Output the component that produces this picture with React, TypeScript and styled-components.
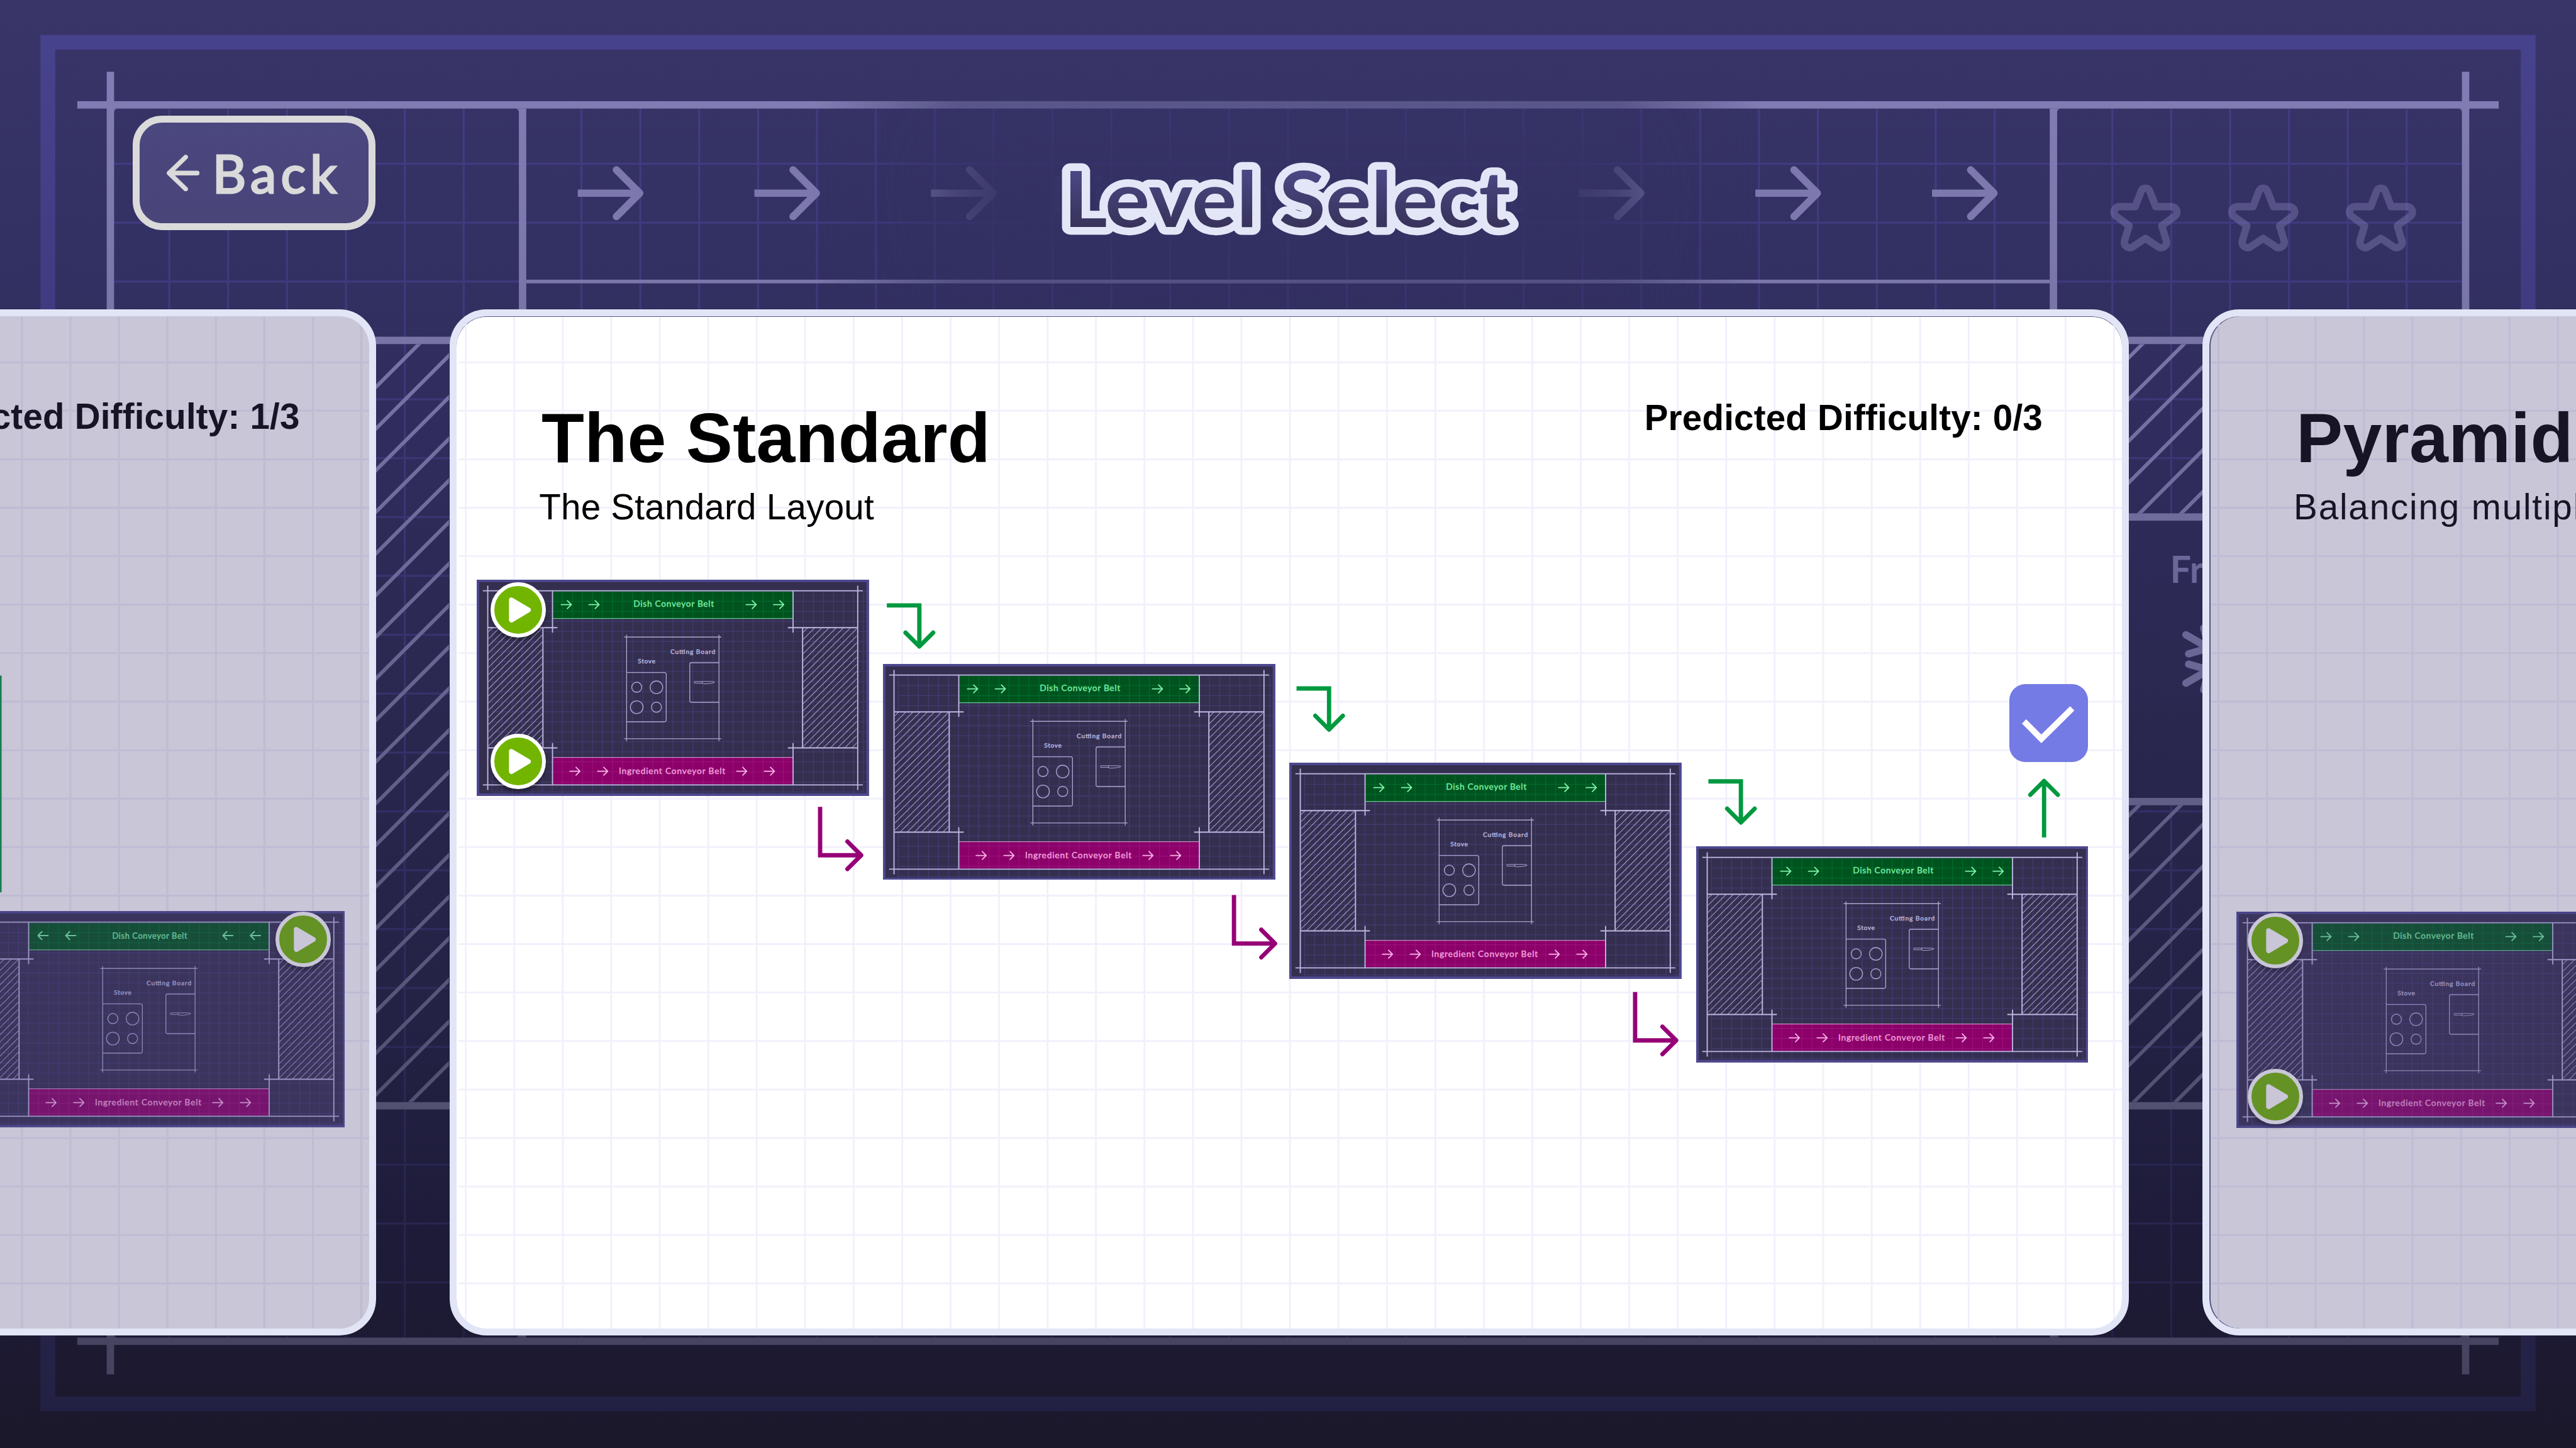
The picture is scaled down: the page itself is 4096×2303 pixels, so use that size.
import React from "react";
import styled, { createGlobalStyle, css } from "styled-components";

const S = 0.97524;
const u = (n: number) => `${(n * S).toFixed(3)}px`;

const hand = `Lato, "Noto Sans", sans-serif`;
const body = `"Liberation Sans", Arial, sans-serif`;

const GREEN = "#00993f";
const PINK = "#960077";

const GlobalStyle = createGlobalStyle`
  html, body { margin: 0; padding: 0; background: #1b182c; }
  *, *::before, *::after { box-sizing: border-box; }
`;

const Stage = styled.main`
  display: grid;
  grid-template: 100% / 100%;
  width: 4096px;
  height: 2303px;
  overflow: hidden;
  background: #2a274f;
`;

const Backdrop = styled.svg`
  grid-area: 1 / 1;
  display: block;
  width: ${u(4200)};
  height: 2303px;
`;

const Screen = styled.div`
  grid-area: 1 / 1;
  display: flex;
  flex-direction: column;
  min-width: 0;
  z-index: 1;
`;

const TopBar = styled.header`
  display: grid;
  grid-template-columns: 1fr auto 1fr;
  align-items: start;
  height: ${u(504)};
  padding: ${u(189)} ${u(216)} 0;
  flex: none;
`;

const BackButton = styled.button`
  display: flex;
  align-items: center;
  width: ${u(396)};
  height: ${u(186)};
  padding: 0 0 0 ${u(44)};
  border: ${u(12)} solid #dadada;
  border-radius: ${u(48)};
  background: linear-gradient(#4b477f, #494579);
  color: #dadada;
  font: 400 ${u(85)} / 1 ${hand};
  letter-spacing: ${u(7.5)};
`;

const BackArrow = styled.svg`
  width: ${u(54)};
  height: ${u(60)};
  margin-right: ${u(21)};
  flex: none;
`;

const BackLabel = styled.span`
  -webkit-text-stroke: ${u(3)} #dadada;
`;

const Title = styled.h1`
  margin: ${u(46)} 0 0;
  font-size: inherit;
  line-height: 0;
`;

const TitleArt = styled.svg`
  display: block;
  width: ${u(800)};
  height: ${u(170)};
`;

const Carousel = styled.section`
  display: flex;
  gap: ${u(119.7)};
  margin-left: ${u(-2125)};
  height: ${u(1674)};
`;

const CardFrame = styled.article<{ $dim?: boolean; $seam?: string }>`
  position: relative;
  flex: none;
  display: flex;
  flex-direction: column;
  width: ${u(2738)};
  height: 100%;
  border: ${u(12)} solid #e2e5f6;
  border-radius: ${u(60)};
  background: #fff;
  overflow: hidden;
  box-shadow: ${(p) => (p.$seam ? `inset ${p.$seam} 0 #5d5890` : "none")};
  ${(p) =>
    p.$dim &&
    css`
      &::after {
        content: "";
        position: absolute;
        inset: 0;
        background: rgba(73, 66, 121, 0.3);
      }
    `}
`;

const Paper = styled.svg`
  position: absolute;
  inset: 0;
  width: 100%;
  height: 100%;
`;

const CardHead = styled.div<{ $start?: number; $end: number; $top: number }>`
  position: relative;
  display: flex;
  justify-content: space-between;
  align-items: flex-start;
  padding: ${(p) => `${u(p.$top)} ${u(p.$end)} 0 ${u(p.$start ?? 135)}`};
`;

const Names = styled.div`
  display: flex;
  flex-direction: column;
  gap: ${u(28)};
  padding-top: ${u(3.5)};
`;

const CardTitle = styled.h2`
  margin: 0 0 0 ${u(4)};
  font: 700 ${u(114)} / 1 ${body};
  letter-spacing: ${u(0.3)};
  color: #000;
  white-space: nowrap;
`;

const Subtitle = styled.p<{ $track?: number }>`
  margin: 0;
  font: 400 ${u(58)} / 1 ${body};
  letter-spacing: ${(p) => u(p.$track ?? 0.25)};
  color: #000;
  white-space: nowrap;
`;

const Difficulty = styled.div`
  font: 700 ${u(58)} / 1 ${body};
  letter-spacing: ${u(0.2)};
  color: #000;
  white-space: nowrap;
`;

const Canvas = styled.svg`
  position: absolute;
  left: 0;
  top: 0;
  width: ${u(2714)};
  height: ${u(1650)};
`;

const Node = styled.div<{ $x: number; $y: number }>`
  position: absolute;
  left: ${(p) => u(p.$x)};
  top: ${(p) => u(p.$y)};
  width: ${u(639.5)};
  height: ${u(352.5)};
`;

const Plan = styled.svg`
  display: block;
  width: 100%;
  height: 100%;
`;

const Badge = styled.div<{ $x: number; $y: number }>`
  position: absolute;
  left: ${(p) => u(p.$x - 45.3)};
  top: ${(p) => u(p.$y - 45.3)};
  width: ${u(90.6)};
  height: ${u(90.6)};
  border: ${u(6.8)} solid #fff;
  border-radius: 50%;
  background: #72b500;
  box-shadow: 0 ${u(6)} ${u(5)} rgba(0, 0, 0, 0.28);
`;

const BadgeIcon = styled.svg`
  display: block;
  width: 100%;
  height: 100%;
`;

const Check = styled.div`
  position: absolute;
  left: ${u(2532)};
  top: ${u(600)};
  width: ${u(128)};
  height: ${u(128)};
  border-radius: ${u(26)};
  background: #747be4;
`;

const range = (n: number) => Array.from({ length: n }, (_, i) => i);

const arrowPath = (x: number, y: number) =>
  `M${x} ${y}h102M${x + 63} ${y - 38}l38 38l-38 38`;

const hatchPath = (sum0: number, step: number, count: number, x0: number, x1: number) =>
  range(count)
    .map((i) => sum0 + i * step)
    .map((s) => `M${x0} ${s - x0}L${x1} ${s - x1}`)
    .join("");

const STAR =
  "M-16.7 57L-6.9 31.5A7.4 7.4 0 0 1 6.9 31.5L16.7 57H42.5A8.7 8.7 0 0 1 47.6 72.8L26.7 88L34.2 113A9 9 0 0 1 20.8 122.6L0 108.7L-20.8 122.6A9 9 0 0 1 -34.2 113L-26.7 88L-47.6 72.8A8.7 8.7 0 0 1 -42.5 57Z";

const BELT_ARROWS = [942, 1230, 1518, 2574, 2862, 3150];

function Blueprint() {
  const xs = range(40).map((i) => 180 + i * 96);
  const ys = range(21).map((i) => 267 + i * 96);
  const grid =
    xs.map((x) => `M${x} 177V2181`).join("") + ys.map((y) => `M180 ${y}H4020`).join("");
  return (
    <Backdrop viewBox="0 0 4200 2361" preserveAspectRatio="none" aria-hidden>
      <defs>
        <linearGradient id="bg" gradientUnits="userSpaceOnUse" x1="0" y1="0" x2="0" y2="2361">
          <stop offset="0" stopColor="#393569" />
          <stop offset=".17" stopColor="#333063" />
          <stop offset=".3" stopColor="#302c5d" />
          <stop offset=".5" stopColor="#2a274f" />
          <stop offset=".72" stopColor="#232143" />
          <stop offset=".86" stopColor="#1e1b39" />
          <stop offset="1" stopColor="#1b182b" />
        </linearGradient>
        <linearGradient id="line" gradientUnits="userSpaceOnUse" x1="0" y1="0" x2="0" y2="2361">
          <stop offset="0" stopColor="#8480b8" />
          <stop offset=".15" stopColor="#7d79ae" />
          <stop offset=".235" stopColor="#7874a6" />
          <stop offset=".36" stopColor="#6f6b9b" />
          <stop offset=".555" stopColor="#615e87" />
          <stop offset=".765" stopColor="#525070" />
          <stop offset=".93" stopColor="#464460" />
          <stop offset="1" stopColor="#424059" />
        </linearGradient>
        <linearGradient id="grid" gradientUnits="userSpaceOnUse" x1="0" y1="0" x2="0" y2="2361">
          <stop offset="0" stopColor="#443d86" />
          <stop offset=".2" stopColor="#3f397c" />
          <stop offset=".5" stopColor="#36316a" />
          <stop offset=".8" stopColor="#292652" />
          <stop offset="1" stopColor="#221f43" />
        </linearGradient>
        <linearGradient id="frame" gradientUnits="userSpaceOnUse" x1="0" y1="0" x2="0" y2="2361">
          <stop offset="0" stopColor="#48438e" />
          <stop offset=".2" stopColor="#413c81" />
          <stop offset=".9" stopColor="#252348" />
          <stop offset="1" stopColor="#222041" />
        </linearGradient>
        <linearGradient id="fade" x1="1330" x2="2870" y1="0" y2="0" gradientUnits="userSpaceOnUse">
          <stop offset="0" stopColor="#fff" stopOpacity="0" />
          <stop offset=".15" stopColor="#fff" stopOpacity=".52" />
          <stop offset=".85" stopColor="#fff" stopOpacity=".52" />
          <stop offset="1" stopColor="#fff" stopOpacity="0" />
        </linearGradient>
        <filter
          id="soft"
          filterUnits="userSpaceOnUse"
          x="1300"
          y="40"
          width="1600"
          height="580"
          colorInterpolationFilters="sRGB"
        >
          <feGaussianBlur stdDeviation="52" />
        </filter>
        <mask id="bandMask" maskUnits="userSpaceOnUse" x="1330" y="165" width="1540" height="340">
          <rect x="1330" y="165" width="1540" height="340" fill="url(#fade)" />
        </mask>
        <mask id="glowMask" maskUnits="userSpaceOnUse" x="1300" y="177" width="1600" height="279">
          <rect x="1550" y="240" width="1100" height="165" fill="#fff" fillOpacity=".88" filter="url(#soft)" />
        </mask>
        <clipPath id="hatchClip">
          <path d="M613 561H732V1797H613ZM3470 561H3592V837H3470ZM3470 1313H3592V1797H3470Z" />
        </clipPath>
      </defs>
      <rect width="4200" height="2361" fill="url(#bg)" />
      <rect x="78" y="69" width="4044" height="2220" fill="none" stroke="url(#frame)" strokeWidth="24" />
      <path d={grid} stroke="url(#grid)" strokeWidth="3.4" fill="none" />
      <rect x="3464" y="849" width="140" height="452" fill="url(#bg)" />
      <g clipPath="url(#hatchClip)">
        <path
          d={hatchPath(1244, 67.88, 20, 600, 740) + hatchPath(4054, 67.88, 24, 3460, 3600)}
          stroke="url(#line)"
          strokeWidth="6"
          fill="none"
        />
      </g>
      <g fill="url(#line)">
        <rect x="126" y="165" width="3948" height="12" />
        <rect x="126" y="2181" width="3948" height="12" />
        <rect x="174" y="117" width="12" height="2124" />
        <rect x="4014" y="117" width="12" height="2124" />
        <rect x="846" y="177" width="12" height="2004" />
        <rect x="3342" y="177" width="12" height="2004" />
        <rect x="858" y="456" width="2484" height="6" />
        <rect x="186" y="549" width="660" height="12" />
        <rect x="3354" y="549" width="660" height="12" />
        <rect x="186" y="1797" width="660" height="12" />
        <rect x="3354" y="1797" width="660" height="12" />
        <rect x="3354" y="837" width="660" height="12" />
        <rect x="3354" y="1301" width="660" height="12" />
        <path d="M186 177h6a6 6 0 0 0-6 6zM846 177h-6a6 6 0 0 1 6 6zM3354 177h6a6 6 0 0 0-6 6zM4014 177h-6a6 6 0 0 1 6 6z" />
        <path d="M186 2181h6a6 6 0 0 1-6-6zM846 2181h-6a6 6 0 0 0 6-6zM3354 2181h6a6 6 0 0 1-6-6zM4014 2181h-6a6 6 0 0 0 6-6z" />
      </g>
      <path
        d={BELT_ARROWS.map((x) => arrowPath(x, 315)).join("")}
        stroke="#7d79ae"
        strokeWidth="12"
        strokeLinejoin="round"
        fill="none"
      />
      <g fill="#7d79ae">
        {BELT_ARROWS.map((x) => (
          <React.Fragment key={x}>
            <circle cx={x + 63} cy={277} r={6} />
            <circle cx={x + 63} cy={353} r={6} />
          </React.Fragment>
        ))}
      </g>
      <text
        x="1712"
        y="347"
        textLength="774"
        lengthAdjust="spacingAndGlyphs"
        fontFamily={hand}
        fontSize="84"
        fill="#7d79ae"
        opacity=".3"
      >
        Dish Conveyor Belt
      </text>
      <rect x="1330" y="165" width="1540" height="340" fill="url(#bg)" mask="url(#bandMask)" />
      <rect x="1300" y="177" width="1600" height="279" fill="url(#bg)" mask="url(#glowMask)" />
      <g stroke="#7f7bb0" strokeOpacity=".46" strokeWidth="12" strokeLinejoin="round" fill="none">
        {[3498, 3690, 3882].map((x) => (
          <path key={x} d={STAR} transform={`translate(${x} 280)`} />
        ))}
      </g>
      <text x="3538" y="950" fontFamily={hand} fontSize="61" fontWeight="700" fill="#6b6798">
        Fr
      </text>
      <g stroke="#6a6695" strokeWidth="12" strokeLinecap="round" fill="none">
        <path d="M3564 1035L3632 1074.5L3564 1114" />
        <path d="M3568.5 1066L3601.6 1056.7L3593 1024M3568.5 1083L3601.6 1092.3L3593 1125" />
      </g>
    </Backdrop>
  );
}

const miniArrow = (x: number, y: number, left?: boolean) =>
  left
    ? `M${x + 17.4} ${y}h-16.4M${x + 7.4} ${y - 6.4}l-6.4 6.4l6.4 6.4`
    : `M${x} ${y}h16.4M${x + 10} ${y - 6.4}l6.4 6.4l-6.4 6.4`;

interface MiniProps {
  x: number;
  y: number;
  plays?: [number, number][];
  reversed?: boolean;
}

function MiniKitchen({ x, y, plays = [], reversed }: MiniProps) {
  const gx = range(38).map((i) => 25.1 + i * 16.37);
  const gy = range(21).map((i) => 18.9 + i * 16.37);
  const gridPath =
    gx.map((v) => `M${v} 18V352`).join("") + gy.map((v) => `M25 ${v}H639`).join("");
  const inGreen =
    gx.filter((v) => v > 125 && v < 515).map((v) => `M${v} 20V63`).join("") + "M124 35.3H515M124 51.7H515";
  const inPink =
    gx.filter((v) => v > 125 && v < 515).map((v) => `M${v} 290V334`).join("") + "M124 297H515M124 313.4H515M124 329.8H515";
  const id = `h${Math.round(x)}-${Math.round(y)}`;
  return (
    <Node $x={x} $y={y}>
      <Plan viewBox="0 0 639.5 352.5" preserveAspectRatio="none">
        <defs>
          <clipPath id={id}>
            <path d="M19 79H107V274H19ZM532 79H620V274H532Z" />
          </clipPath>
        </defs>
        <rect width="639.5" height="352.5" fill="#352f4f" />
        <rect x="2" y="2" width="635.5" height="348.5" fill="none" stroke="#4d488f" strokeWidth="4" />
        <path d={gridPath} stroke="#5650a8" strokeOpacity=".36" strokeWidth="1.3" fill="none" />
        <rect x="124" y="19" width="391.5" height="44" fill="#00531f" />
        <path d={inGreen} stroke="#00802f" strokeOpacity=".55" strokeWidth="1.3" fill="none" />
        <rect x="124" y="290" width="391.5" height="44" fill="#8b0069" />
        <path d={inPink} stroke="#b02a90" strokeOpacity=".4" strokeWidth="1.3" fill="none" />
        <path d="M124 63.2H515.5" stroke="#62c98a" strokeWidth="1.2" />
        <path d="M124 289.8H515.5" stroke="#c58fc4" strokeWidth="1.2" />
        <g clipPath={`url(#${id})`}>
          <path
            d={hatchPath(104, 11.65, 26, 15, 110) + hatchPath(618, 11.65, 26, 528, 624)}
            stroke="#b5b0d8"
            strokeOpacity=".8"
            strokeWidth="1.2"
            fill="none"
          />
        </g>
        <g stroke="#bdb8e2" strokeWidth="1.9" fill="none">
          <path d="M10 18H629.5M10 334.7H629.5M18 9.7V343M621.2 9.7V343" />
          <path d="M123.6 18V86.5M18 78.2H131.6M515.8 18V86.5M507.3 78.2H621" />
          <path d="M123.6 334.7V266.4M18 274.3H131.6M515.8 334.7V266.4M507.3 274.3H621" />
          <path d="M108 78V274M531.3 78V274" />
        </g>
        <g stroke="#aaa5cd" strokeWidth="1.4" fill="none">
          <path d="M240.4 93.6H398.9M240.4 259.3H398.9M244.4 89.7V263.2M395 89.7V263.2" />
          <path d="M244.4 151.4H306a3 3 0 0 1 3 3V228.8a3 3 0 0 1-3 3H244.4" />
          <path d="M395 135.3H350a2.6 2.6 0 0 0-2.6 2.6V197.4a2.6 2.6 0 0 0 2.6 2.6H395" />
          <circle cx="260.9" cy="175.4" r="8.2" />
          <circle cx="293" cy="175.4" r="10.3" />
          <circle cx="260.9" cy="207.9" r="10.4" />
          <circle cx="293" cy="207.9" r="8.2" />
          <path d="M355 166H384q3.6 .4 3.8 1.4q-4 2.2-17.8 2.6l-2-1.2H355ZM367.7 166V169.6" strokeWidth="1" />
        </g>
        <path
          d={[137.8, 183.1, 439.3, 484.2].map((v) => miniArrow(v, reversed ? 40 : 40.7, reversed)).join("")}
          stroke="#7df3a8"
          strokeWidth="1.9"
          strokeLinecap="round"
          strokeLinejoin="round"
          fill="none"
        />
        <path
          d={[151.9, 197.2, 423.8, 469].map((v) => miniArrow(v, 312.3)).join("")}
          stroke="#f9b0e6"
          strokeWidth="1.9"
          strokeLinecap="round"
          strokeLinejoin="round"
          fill="none"
        />
        <g fontFamily={hand} strokeWidth=".45" strokeLinejoin="round">
          <text
            x={reversed ? 260 : 255.7}
            y={reversed ? 45 : 44}
            fontSize={reversed ? 13.2 : 14}
            textLength={reversed ? 122 : 131}
            fill="#74eda0"
            stroke="#74eda0"
          >
            Dish Conveyor Belt
          </text>
          <text x="231.7" y="317.2" fontSize="14" textLength="173.6" fill="#f39fdc" stroke="#f39fdc">
            Ingredient Conveyor Belt
          </text>
          <text x="315.7" y="120.8" fontSize="10.4" textLength="73" fill="#b9b4dc" stroke="#b9b4dc">
            Cutting Board
          </text>
          <text x="262.8" y="136.8" fontSize="10.4" textLength="28.3" fill="#b9b4dc" stroke="#b9b4dc">
            Stove
          </text>
        </g>
      </Plan>
      {plays.map(([px, py]) => (
        <Badge key={`${px}-${py}`} $x={px} $y={py}>
          <BadgeIcon viewBox="-38.5 -38.5 77 77">
            <path
              d="M-11 -16L16 0L-11 16Z"
              fill="#fff"
              stroke="#fff"
              strokeWidth="8"
              strokeLinejoin="round"
            />
          </BadgeIcon>
        </Badge>
      ))}
    </Node>
  );
}

function GridPaper() {
  const d =
    range(35).map((i) => `M${15 + i * 79} 1V1650`).join("") +
    range(20).map((i) => `M3 ${75 + i * 79}H2714`).join("");
  return (
    <Paper viewBox="0 0 2714 1650" preserveAspectRatio="none" aria-hidden>
      <path d={d} stroke="#f2f0fb" strokeWidth="3" fill="none" />
    </Paper>
  );
}

const downHook = (x: number, y: number) =>
  `M${x} ${y}h53v66M${x + 30.5} ${y + 44.5}l22.5 22.5l22.5 -22.5`;
const rightHook = (x: number, y: number) =>
  `M${x} ${y}v79h67M${x + 44.5} ${y + 56.5}l22.5 22.5l-22.5 22.5`;

function Flow({ color, paths }: { color: string; paths: string[] }) {
  return (
    <>
      {paths.map((d) => {
        const [stem, head] = d.slice(1).split("M");
        return (
          <g key={d} stroke={color} strokeWidth="7" fill="none">
            <path d={`M${stem}`} />
            <path d={`M${head}`} strokeLinecap="round" strokeLinejoin="round" />
          </g>
        );
      })}
    </>
  );
}

export default function App() {
  return (
    <>
      <GlobalStyle />
      <Stage>
        <Blueprint />
        <Screen>
          <TopBar>
            <BackButton type="button">
              <BackArrow viewBox="0 0 54 60">
                <path
                  d="M50 30H4M31 4L4 30L31 56"
                  stroke="#dadada"
                  strokeWidth="7.5"
                  strokeLinecap="round"
                  strokeLinejoin="round"
                  fill="none"
                />
              </BackArrow>
              <BackLabel>Back</BackLabel>
            </BackButton>
            <Title>
              <TitleArt viewBox="1700 235 800 170">
                <defs>
                  <linearGradient id="titleFill" gradientUnits="userSpaceOnUse" x1="0" y1="275" x2="0" y2="375">
                    <stop offset="0" stopColor="#4c4886" />
                    <stop offset="1" stopColor="#363258" />
                  </linearGradient>
                </defs>
                <text
                  y="370.5"
                  fontFamily={hand}
                  fontSize="125"
                  fontWeight="700"
                  fill="url(#titleFill)"
                  stroke="#e3e6f7"
                  strokeWidth="25"
                  strokeLinejoin="round"
                  paintOrder="stroke"
                >
                  <tspan x="1734" textLength="316" lengthAdjust="spacingAndGlyphs">
                    Level
                  </tspan>{" "}
                  <tspan x="2085" textLength="378" lengthAdjust="spacingAndGlyphs">
                    Select
                  </tspan>
                </text>
              </TitleArt>
            </Title>
          </TopBar>
          <Carousel>
            <CardFrame $dim>
              <GridPaper />
              <CardHead $end={113} $top={136}>
                <Names />
                <Difficulty>Predicted Difficulty: 1/3</Difficulty>
              </CardHead>
              <Canvas viewBox="0 0 2714 1650">
                <path d="M2112.5 586V939.5" stroke={GREEN} strokeWidth="7" />
              </Canvas>
              <MiniKitchen x={2036.5} y={971} reversed plays={[[571.5, 45.5]]} />
            </CardFrame>
            <CardFrame $seam="0 1px">
              <GridPaper />
              <CardHead $end={129} $top={138}>
                <Names>
                  <CardTitle>The Standard</CardTitle>
                  <Subtitle>The Standard Layout</Subtitle>
                </Names>
                <Difficulty>Predicted Difficulty: 0/3</Difficulty>
              </CardHead>
              <Canvas viewBox="0 0 2714 1650">
                <Flow
                  color={GREEN}
                  paths={[
                    downHook(701.5, 471.5),
                    downHook(1369.5, 607),
                    downHook(2041, 758.5),
                    "M2588.3 850V760M2565.8 780.5L2588.3 758L2610.8 780.5",
                  ]}
                />
                <Flow
                  color={PINK}
                  paths={[rightHook(592.7, 800), rightHook(1267.5, 944), rightHook(1921.5, 1102)]}
                />
              </Canvas>
              <MiniKitchen
                x={33.3}
                y={430.4}
                plays={[
                  [67.5, 49],
                  [67.5, 296.4],
                ]}
              />
              <MiniKitchen x={695.9} y={567.2} />
              <MiniKitchen x={1358.5} y={728.5} />
              <MiniKitchen x={2021} y={865} />
              <Check>
                <BadgeIcon viewBox="0 0 128 128">
                  <path d="M24 60.9L52.2 89.3L102.5 39.6" stroke="#fff" strokeWidth="10" fill="none" />
                </BadgeIcon>
              </Check>
            </CardFrame>
            <CardFrame $dim $seam="2px 0">
              <GridPaper />
              <CardHead $start={138} $end={126} $top={138}>
                <Names>
                  <CardTitle>Pyramid</CardTitle>
                  <Subtitle $track={1.9}>Balancing multiple</Subtitle>
                </Names>
              </CardHead>
              <MiniKitchen
                x={44.5}
                y={971.5}
                plays={[
                  [64, 47],
                  [64, 301.5],
                ]}
              />
            </CardFrame>
          </Carousel>
        </Screen>
      </Stage>
    </>
  );
}
